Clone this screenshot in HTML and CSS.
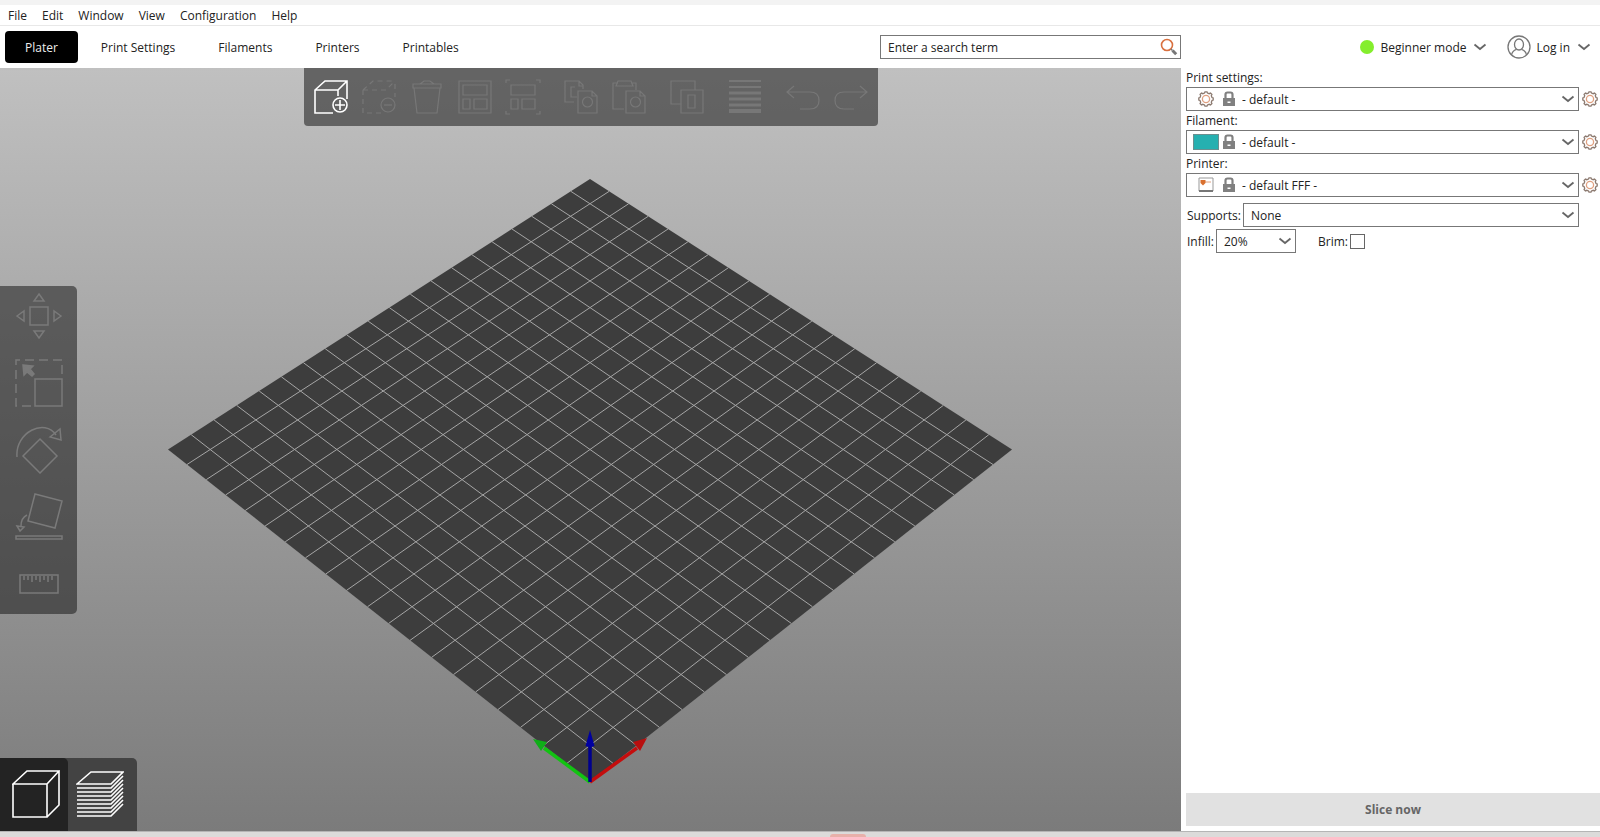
FILE: index.html
```html
<!DOCTYPE html>
<html lang="en">
<head>
  <meta charset="UTF-8" />
  <meta name="viewport" content="width=device-width, initial-scale=1.0"/>
  <title>Plater</title>
  <link rel="stylesheet" href="styles.css">
</head>
<body>
  <!-- shared icons -->
  <svg class="sprite" aria-hidden="true">
    <symbol id="chevron" viewBox="0 0 14 14"><path d="M1.5 4.5L7 9L12.5 4.5" fill="none" stroke="#666" stroke-width="1.8"/></symbol>
    <symbol id="lock" viewBox="0 0 14 16"><path d="M3.5 8V3.5Q3.5 1.5 5.5 1.5H8.5Q10.5 1.5 10.5 3.500V8" fill="none" stroke="#808080" stroke-width="2.2"/><path d="M1 7H13V15H1Z" fill="#808080"/><path d="M5.5 10.5H8.5V12H5.500Z" fill="#fff"/></symbol>
    <symbol id="gear" viewBox="0 0 16 16"><path d="M6.5 2L7 .8H9L9.5 2L11.2 2.7L12.5 2.1L13.9 3.5L13.3 4.8L14 6.5L15.2 7V9L14 9.5L13.3 11.2L13.9 12.5L12.5 13.9L11.2 13.3L9.5 14L9 15.2H7L6.5 14L4.8 13.3L3.5 13.9L2.1 12.5L2.7 11.2L2 9.5L.8 9V7L2 6.5L2.7 4.8L2.1 3.5L3.5 2.1L4.8 2.7Z" fill="none" stroke="#8c7a70" stroke-width="1.3"/><circle cx="8" cy="8" r="3.6" fill="none" stroke="#e0a080" stroke-width="1.3"/></symbol>
  </svg>

  <div class="titlebar"></div>
  <nav class="menubar">
    <button>File</button>
    <button>Edit</button>
    <button>Window</button>
    <button>View</button>
    <button>Configuration</button>
    <button>Help</button>
  </nav>

  <header class="topbar">
    <nav class="tabs">
      <button class="tab active">Plater</button>
      <button class="tab">Print Settings</button>
      <button class="tab">Filaments</button>
      <button class="tab">Printers</button>
      <button class="tab">Printables</button>
    </nav>
    <div class="search">
      <input type="text" aria-label="Search" placeholder="Enter a search term">
      <button aria-label="Search">
        <svg width="18" height="18" viewBox="0 0 18 18"><circle cx="7" cy="7" r="5.5" fill="none" stroke="#d9703f" stroke-width="1.6"/><path d="M11 11L12.5 12.5" stroke="#777" stroke-width="1.5"/><path d="M12.5 12.5L16.2 16.2" stroke="#777" stroke-width="3"/></svg>
      </button>
    </div>
    <div class="account">
      <button class="mode"><span class="dot"></span>Beginner mode<svg width="14" height="14"><use href="#chevron"/></svg></button>
      <button class="login">
        <span class="user">
          <svg width="24" height="24" viewBox="0 0 24 24" fill="none" stroke="#777" stroke-width="1.3"><circle cx="12" cy="12" r="11"/><ellipse cx="12" cy="9.5" rx="4.5" ry="5.5"/><path d="M4.5 20C5 16.5 7.5 15 9.5 14.3M19.5 20C19 16.5 16.5 15 14.5 14.3"/></svg>
          Log in
        </span>
        <svg width="14" height="14"><use href="#chevron"/></svg>
      </button>
    </div>
  </header>

  <main class="workspace">
    <section class="viewport">
      <svg class="scene" viewBox="0 0 1181 763">
        <path d="M590 111L1012 381.5L590 714L168 381.5Z" fill="#3d3d3d"/>
        <path id="grid" fill="none" stroke="#a6a6a6" stroke-width="1"/>
        <path d="M590 714L544 680" stroke="#12c312" stroke-width="3.5"/>
        <path d="M533 671L547 674L541 683Z" fill="#0fae18"/>
        <path d="M590 714L637 680" stroke="#c40d0d" stroke-width="3.5"/>
        <path d="M647 670L633 674L640 683Z" fill="#b80f0f"/>
        <path d="M590 714V675" stroke="#00008e" stroke-width="3.5"/>
        <path d="M590 662L594.5 678Q590 680 585.5 678Z" fill="#0000a0"/>
      </svg>

      <div class="toolbar">
        <div class="group">
          <button class="enabled" aria-label="Add">
            <svg width="36" height="36" viewBox="0 0 36 36"><path d="M20 34H2V11L12 2H34V20M2 11H25L34 2M25 11V17"/><circle cx="27" cy="26" r="7"/><path d="M27 21V31M22 26H32"/></svg>
          </button>
          <button disabled aria-label="Delete">
            <svg width="36" height="36" viewBox="0 0 36 36"><path d="M2 11L12 2H34M2 11H25L34 2M2 11V34H20M34 5V18" stroke-dasharray="5 4"/><circle cx="27" cy="26" r="7"/><path d="M23 26H31"/></svg>
          </button>
          <button disabled aria-label="Delete all">
            <svg width="36" height="36" viewBox="0 0 36 36"><path d="M4 5H32V9H4ZM11 5L15 2H21L25 5M5 9L8 34H28L31 9"/></svg>
          </button>
          <button disabled aria-label="Arrange">
            <svg width="36" height="36" viewBox="0 0 36 36"><path d="M2 2H34V34H2ZM6 6H30V16H6ZM6 20H13V30H6ZM17 20H30V30H17Z"/></svg>
          </button>
          <button disabled aria-label="Arrange selection">
            <svg width="36" height="36" viewBox="0 0 36 36"><path d="M6 6H30V16H6ZM6 20H13V30H6ZM17 20H30V30H17ZM1 4V1H5M31 1H35V4M1 32V35H5M31 35H35V32"/></svg>
          </button>
        </div>
        <div class="group">
          <button disabled aria-label="Copy">
            <svg width="36" height="36" viewBox="0 0 36 36"><path d="M11 23H2V2H16L20 6V10M16 2V7H20M14 18H8V8H12M15 12H29L34 17V34H15ZM29 12V17H34"/><circle cx="24.5" cy="23" r="5"/></svg>
          </button>
          <button disabled aria-label="Paste">
            <svg width="36" height="36" viewBox="0 0 36 36"><path d="M13 30H2V4H7M20 4H25V11M7 2H20L22 7H5ZM15 12H29L34 17V34H15ZM29 12V17H34"/><circle cx="24.5" cy="23" r="5"/></svg>
          </button>
        </div>
        <div class="group">
          <button disabled aria-label="Instances">
            <svg width="36" height="36" viewBox="0 0 36 36"><path d="M12 25H2V2H26V11M12 11H34V34H12ZM19 16H26V29H19Z"/></svg>
          </button>
        </div>
        <div class="group">
          <button disabled aria-label="Variable layer height">
            <svg width="36" height="36" viewBox="0 0 36 36"><path d="M2 2H34M2 8H34" stroke-width="2"/><path d="M2 14H34M2 20H34M2 26H34" stroke-width="3"/><path d="M2 32H34" stroke-width="4"/></svg>
          </button>
        </div>
        <div class="group">
          <button disabled aria-label="Undo">
            <svg width="36" height="36" viewBox="0 0 36 36"><path d="M9 7L2 13L9 19M2 13H25Q34 13 34 21.5Q34 30 25 30H15"/></svg>
          </button>
          <button disabled aria-label="Redo">
            <svg width="36" height="36" viewBox="0 0 36 36"><path d="M27 7L34 13L27 19M34 13H11Q2 13 2 21.5Q2 30 11 30H21"/></svg>
          </button>
        </div>
      </div>

      <div class="gizmos">
        <button disabled aria-label="Move">
          <svg width="48" height="48" viewBox="0 0 48 48"><path d="M15 15H33V33H15ZM24 2L29 9H19ZM24 46L29 39H19ZM2 24L9 19V29ZM46 24L39 19V29Z"/></svg>
        </button>
        <button disabled aria-label="Scale">
          <svg width="48" height="48" viewBox="0 0 48 48"><path d="M20 20H47V47H20Z"/><path d="M16 47H1V1H47V16" stroke-dasharray="9 5"/><path d="M8 6L18 7L15 10L19 15L17 17L12 13L9 16Z" fill="#7a7a7a"/></svg>
        </button>
        <button disabled aria-label="Rotate">
          <svg width="48" height="48" viewBox="0 0 48 48"><path d="M25 13L42 30L25 47L8 30ZM2 31C0 6 30-8 41 9M35 11L45 3L46 14Z"/></svg>
        </button>
        <button disabled aria-label="Place on face">
          <svg width="48" height="48" viewBox="0 0 48 48"><path d="M20 1L47 8L40 35L13 28ZM1 43H47V46H1ZM12 22Q6 25 6 33M2 33L5 38L9 34Z"/></svg>
        </button>
        <button disabled aria-label="Measure">
          <svg width="48" height="48" viewBox="0 0 48 48"><path d="M5 15H43V33H5ZM9 16V20M13 16V20M17 16V22M21 16V20M25 16V22M29 16V20M33 16V22M37 16V20"/></svg>
        </button>
      </div>

      <div class="views">
        <button class="active" aria-label="3D editor view">
          <svg width="48" height="48" viewBox="0 0 48 48"><path d="M1 14L15 1H47L35 14ZM1 14V47H35V14M35 47L47 35V1"/></svg>
        </button>
        <button aria-label="Preview">
          <svg width="48" height="48" viewBox="0 0 48 48"><path d="M1 14L15 2H47L35 14Z"/><path d="M1 18H35L47 6M1 22H35L47 10M1 26H35L47 14M1 30H35L47 18M1 34H35L47 22M1 38H35L47 26M1 42H35L47 30M1 46H35L47 34"/></svg>
        </button>
      </div>
    </section>

    <aside class="sidebar">
      <label for="print">Print settings:</label>
      <div class="preset">
        <div class="combo">
          <select id="print"><option>- default -</option></select>
          <div class="badge"><svg class="kind" width="16" height="16"><use href="#gear"/></svg><svg width="14" height="16"><use href="#lock"/></svg></div>
          <svg class="arrow" width="14" height="14"><use href="#chevron"/></svg>
        </div>
        <button aria-label="Edit print settings"><svg width="16" height="16"><use href="#gear"/></svg></button>
      </div>
      <label for="filament">Filament:</label>
      <div class="preset">
        <div class="combo">
          <select id="filament"><option>- default -</option></select>
          <div class="badge"><span class="kind swatch"></span><svg width="14" height="16"><use href="#lock"/></svg></div>
          <svg class="arrow" width="14" height="14"><use href="#chevron"/></svg>
        </div>
        <button aria-label="Edit filament"><svg width="16" height="16"><use href="#gear"/></svg></button>
      </div>
      <label for="printer">Printer:</label>
      <div class="preset">
        <div class="combo">
          <select id="printer"><option>- default FFF -</option></select>
          <div class="badge"><svg class="kind" width="16" height="16" viewBox="0 0 16 16"><path d="M1 1H15V14H1Z" fill="#fff" stroke="#999"/><path d="M1 14H15" stroke="#777" stroke-width="2"/><path d="M3 5H13" stroke="#e0a080"/><path d="M2.5 3H7.5V6L5 8.5L2.5 6Z" fill="#d9702f"/></svg><svg width="14" height="16"><use href="#lock"/></svg></div>
          <svg class="arrow" width="14" height="14"><use href="#chevron"/></svg>
        </div>
        <button aria-label="Edit printer"><svg width="16" height="16"><use href="#gear"/></svg></button>
      </div>

      <div class="row supports">
        <label for="supports">Supports:</label>
        <div class="combo">
          <select id="supports"><option>None</option></select>
          <svg class="arrow" width="14" height="14"><use href="#chevron"/></svg>
        </div>
      </div>
      <div class="row">
        <label for="infill">Infill:</label>
        <div class="combo infill">
          <select id="infill"><option>20%</option></select>
          <svg class="arrow" width="14" height="14"><use href="#chevron"/></svg>
        </div>
        <label for="brim" class="brim">Brim:</label>
        <input type="checkbox" id="brim">
      </div>

      <button class="slice" disabled>Slice now</button>
    </aside>
  </main>

  <footer class="statusbar"><span class="marker"></span></footer>

  <script src="script.js"></script>
</body>
</html>
```

FILE: styles.css
```css
* {
  box-sizing: border-box;
}
body {
  margin: 0;
  height: 100vh;
  display: flex;
  flex-direction: column;
  overflow: hidden;
  background: #fff;
  color: #222;
  font-family: "Open Sans", "Noto Sans", sans-serif;
  font-size: 12px;
}
button, input, select {
  font: inherit;
  color: inherit;
}
button {
  padding: 0;
  border: none;
  background: none;
}
svg {
  display: block;
  flex: none;
}
.sprite {
  position: absolute;
  width: 0;
  height: 0;
}

/* top of the window */
.titlebar {
  height: 5px;
  background: #f3f3f3;
}
.menubar {
  display: flex;
  gap: 15px;
  height: 21px;
  padding: 0 8px;
  border-bottom: 1px solid #e8e8e8;
}
.topbar {
  display: flex;
  align-items: center;
  height: 42px;
}
.tabs {
  display: flex;
  flex: 1;
  gap: 3px;
  padding-left: 5px;
}
.tab {
  height: 32px;
  padding: 0 20px;
  border-radius: 4px;
}
.tab.active {
  background: #000;
  color: #eee;
}
.search {
  display: flex;
  align-items: center;
  width: 301px;
  height: 24px;
  padding-right: 2px;
  border: 1px solid #777;
}
.search input {
  flex: 1;
  min-width: 0;
  padding: 0 7px;
  border: none;
  outline: none;
  background: none;
}
.search input::placeholder {
  color: #222;
}
.account {
  display: flex;
  justify-content: flex-end;
  gap: 20px;
  width: 419px;
  padding-right: 9px;
}
.account button, .user {
  display: flex;
  align-items: center;
  gap: 7px;
}
.user {
  gap: 5px;
}
.dot {
  width: 14px;
  height: 14px;
  border-radius: 50%;
  background: #84ee2d;
}

/* 3D view */
.workspace {
  display: flex;
  flex: 1;
  min-height: 0;
}
.viewport {
  position: relative;
  flex: 1;
  min-width: 0;
  background: linear-gradient(#c0c0c0, #7b7b7b);
}
.scene {
  width: 100%;
  height: 100%;
}
.toolbar {
  position: absolute;
  top: 0;
  left: 50%;
  transform: translateX(-50%);
  display: flex;
  gap: 22px;
  padding: 11px 9px;
  border-radius: 0 0 4px 4px;
  background: rgba(28, 28, 28, 0.56);
}
.group {
  display: flex;
  gap: 12px;
}
.toolbar svg, .gizmos svg, .views svg {
  fill: none;
  stroke: #777;
  stroke-width: 1.2;
}
.toolbar .enabled svg {
  stroke: #fff;
  stroke-width: 1.6;
}
.gizmos {
  position: absolute;
  top: 50%;
  left: 0;
  transform: translateY(-50%);
  display: flex;
  flex-direction: column;
  gap: 19px;
  padding: 6px 14px 6px 15px;
  border-radius: 0 5px 5px 0;
  background: rgba(28, 28, 28, 0.56);
}
.gizmos svg {
  stroke: #7a7a7a;
  stroke-width: 1.5;
}
.views {
  position: absolute;
  left: 0;
  bottom: 0;
  display: flex;
  border-radius: 0 5px 0 0;
  background: #434343;
}
.views button {
  padding: 12px 13px 13px 8px;
}
.views .active {
  padding-right: 8px;
  padding-left: 12px;
  border-radius: 0 5px 0 0;
  background: #232323;
}
.views svg {
  stroke: #fff;
  stroke-width: 1.6;
}

/* settings */
.sidebar {
  display: flex;
  flex-direction: column;
  width: 419px;
  padding: 0 0 5px 5px;
}
.sidebar > label {
  height: 19px;
  line-height: 19px;
}
.preset {
  display: flex;
  align-items: center;
  gap: 3px;
  padding-right: 2px;
}
.combo {
  position: relative;
  flex: 1;
}
.combo select {
  display: block;
  width: 100%;
  height: 24px;
  padding: 0 24px 0 7px;
  border: 1px solid #777;
  border-radius: 0;
  background: #fff;
  appearance: none;
}
.preset select {
  padding-left: 55px;
}
.badge {
  position: absolute;
  top: 4px;
  left: 7px;
  display: flex;
  align-items: center;
  gap: 3px;
  pointer-events: none;
}
.kind {
  margin: 0 5px;
}
.swatch {
  width: 26px;
  height: 16px;
  margin: 0;
  border: 1px solid #6b8f8f;
  background: #26b0b0;
}
.arrow {
  position: absolute;
  top: 5px;
  right: 4px;
  pointer-events: none;
}
.row {
  display: flex;
  align-items: center;
  gap: 2px;
  margin-top: 2px;
  padding: 0 21px 0 1px;
}
.supports {
  margin-top: 6px;
}
.infill {
  flex: none;
  width: 80px;
}
.brim {
  margin-left: 20px;
}
.row input {
  width: 15px;
  height: 15px;
  margin: 0;
  border: 1px solid #666;
  background: #fff;
  appearance: none;
}
.row input:checked {
  background: #666;
}
.slice {
  height: 33px;
  margin-top: auto;
  background: #e1e1e1;
  color: #666;
  font-weight: bold;
}
.statusbar {
  display: flex;
  align-items: flex-end;
  height: 6px;
  border-top: 1px solid #b5b5b5;
  background: #dcdbda;
}
.marker {
  width: 36px;
  height: 3px;
  margin-left: 830px;
  border-radius: 3px 3px 0 0;
  background: #e8b0aa;
}
```

FILE: script.js
```js
// bed corners in the scene: near, right, far, left
const near = [590, 714];
const right = [1012, 381.5];
const left = [168, 381.5];
const persp = 0.1146;
const cells = 20;

// position on the bed (0..1 on each side) to a point of the scene
function project(u, v) {
  const w = 1 + persp * (u + v);
  return [0, 1].map(i => {
    const a = right[i] * (1 + persp) - near[i];
    const b = left[i] * (1 + persp) - near[i];
    return ((a * u + b * v + near[i]) / w).toFixed(1);
  }).join(" ");
}

let d = "";
for (let i = 1; i < cells; i++) {
  const t = i / cells;
  d += `M${project(t, 0)}L${project(t, 1)}M${project(0, t)}L${project(1, t)}`;
}
document.getElementById("grid").setAttribute("d", d);
```
